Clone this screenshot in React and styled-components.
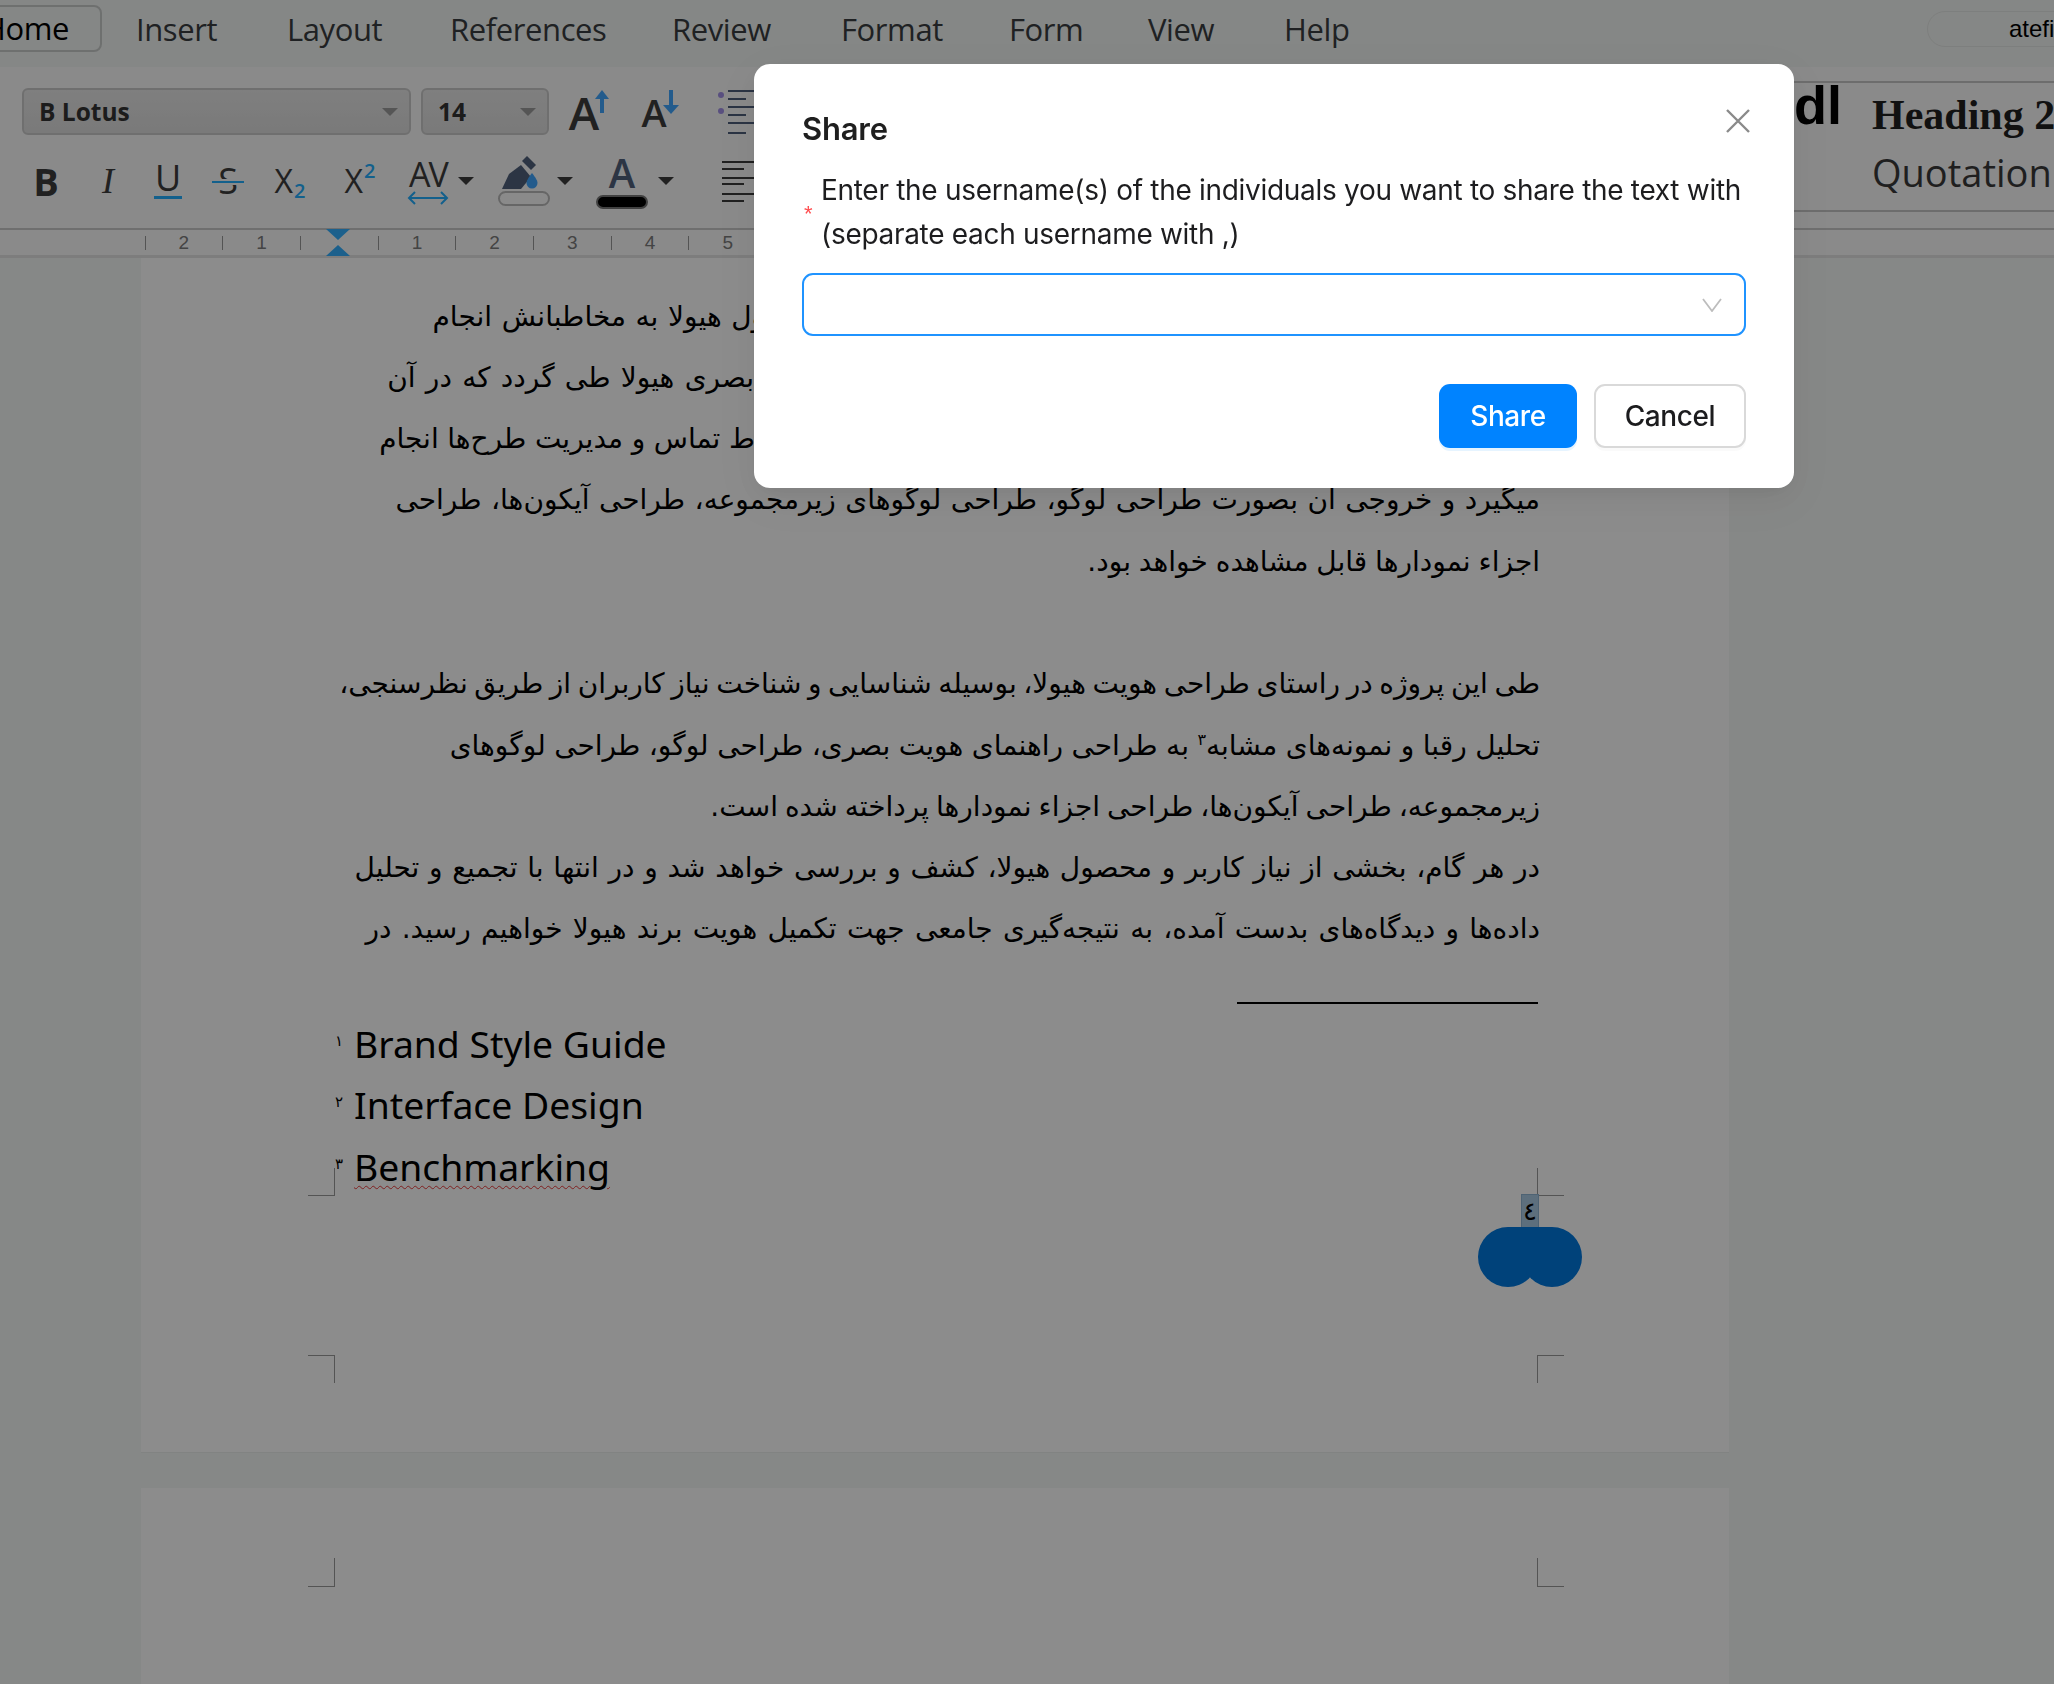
import React from "react";
import styled, { createGlobalStyle } from "styled-components";

const Global = createGlobalStyle`
  html, body { margin: 0; padding: 0; background: #f4f6f5; }
  #root { width: 2054px; height: 1684px; overflow: hidden; position: relative; }
  * { box-sizing: border-box; }
`;

const Shell = styled.div`
  width: 2054px; height: 1684px; overflow: hidden; display: flex; flex-direction: column;
  font-family: "Open Sans", "Noto Sans", sans-serif; color: #000;
`;
const TabBar = styled.div`
  height: 67px; flex: none; display: flex; align-items: flex-start; background: #f3f6f4; position: relative;
`;
const Tab = styled.div`
  font-size: 31px; letter-spacing: -0.4px; line-height: 47px; height: 47px; margin-top: 6px; color: ${p => (p.$active ? "#000" : "#3a3d41")};
  width: ${p => p.$w}px; white-space: nowrap; flex: none;
  ${p => p.$active && `
    margin: 5px 34px 0 -34px; padding-right: 31px; text-align: right; border: 2px solid #c9cccb; border-radius: 8px; line-height: 43px;
  `}
`;
const UserPill = styled.div`
  margin-left: auto; margin-top: 11px; margin-right: -40px; width: 167px; height: 36px; border: 1px solid #e4e7e5; border-radius: 18px;
  font: 24px/34px "Liberation Sans", sans-serif; padding-left: 81px; white-space: nowrap; flex: none; color: #000;
`;
const Toolbar = styled.div`
  height: 161px; flex: none; background: #fbfbfb; display: flex; overflow: hidden;
`;
const ToolColumn = styled.div`
  width: 760px; flex: none; display: flex; flex-direction: column;
`;
const ToolRow = styled.div`
  display: flex; align-items: center; flex: none; height: ${p => p.$h}px; padding-top: ${p => p.$pt || 0}px; padding-left: ${p => p.$pl || 0}px;
`;
const SelectBox = styled.div`
  width: ${p => p.$w}px; height: 47px; margin-left: ${p => p.$ml || 0}px; flex: none; display: flex; align-items: center; justify-content: space-between;
  padding: 0 11px 0 15px; border: 2px solid #cbcbcb; border-radius: 6px;
  background: linear-gradient(#e7e7e7, #dedede);
  font-size: 24.500px; font-weight: 700; color: #333;
`;
const Caret = styled.span`
  flex: none; width: 0; height: 0; border-left: ${p => p.$s || 8}px solid transparent; border-right: ${p => p.$s || 8}px solid transparent;
  border-top: ${p => (p.$s || 8)}px solid ${p => p.$c || "#9b9b9b"};
`;
const Slot = styled.div`
  width: ${p => p.$w}px; margin-left: ${p => p.$ml || 0}px; flex: none; display: flex; align-items: center; justify-content: center; position: relative;
  height: 50px;
`;
const Big = styled.span`
  font-size: ${p => p.$s}px; font-weight: ${p => p.$b || 400}; line-height: 1; color: ${p => p.$c || "#3c3c3c"};
  font-family: ${p => p.$f || `"Open Sans", sans-serif`}; font-style: ${p => p.$i ? "italic" : "normal"};
  letter-spacing: ${p => p.$ls || 0}px;
`;
const UnderLetter = styled(Big)`
  display: inline-block; border-bottom: 3px solid #24afff; line-height: 30px; padding: 0 1px 3px;
`;
const StrikeLetter = styled(Big)`
  position: relative; display: inline-block;
  &::after {
    content: ""; position: absolute; left: -6px; right: -6px; top: 50%; height: 2px; background: #24afff; box-shadow: 0 -2px 0 #fbfbfb, 0 2px 0 #fbfbfb;
  }
`;
const Index = styled.span`
  font-size: 20px; font-weight: 600; color: #24afff; line-height: 1; position: relative; top: ${p => p.$top}px; margin-left: 1px;
`;
const StylesPanel = styled.div`
  margin-left: auto; width: 260px; flex: none; margin-top: 14px; height: 131px; border-top: 2px solid #c7c7c7; border-bottom: 2px solid #c7c7c7;
  display: flex; overflow: hidden;
`;
const StyleHead = styled.div`
  font: 700 54px/44px "Liberation Sans", sans-serif; color: #000; width: 78px; flex: none; overflow: hidden; direction: rtl; text-align: left; padding-left: 0;
`;
const StyleStack = styled.div`
  display: flex; flex-direction: column; flex: none;
`;
const StyleH2 = styled.div`
  font: 700 42px/46px "Liberation Serif", serif; color: #1f1f1f; white-space: nowrap; margin-top: 9px;
`;
const StyleQuote = styled.div`
  font: 400 38px/50px "Open Sans", sans-serif; color: #3a3a3a; white-space: nowrap; margin-top: 9px;
`;
const Ruler = styled.div`
  height: 30px; flex: none; display: flex; align-items: center; padding-left: 125.6px; background: #fbfbfb; border-top: 2px solid #cacaca; border-bottom: 3px solid #e4e4e4;
`;
const RulerCell = styled.div`
  width: 38.85px; flex: none; height: 25px; display: flex; align-items: center; justify-content: center; font: 19px "Liberation Sans", sans-serif; color: #7c7c7c;
`;
const RulerTick = styled.span`
  width: 1px; height: 14px; background: #999;
`;
const PageArea = styled.div`
  flex: 1; min-height: 0; background: #f5f7f6; padding-left: 141px; display: flex; flex-direction: column; gap: 35px;
`;
const Page = styled.div`
  width: 1588px; height: ${p => p.$h}px; flex: none; background: #fff; position: relative; border-bottom: 1px solid #ecefed;
  padding: ${p => p.$pt || 0}px 189px 0 0;
`;
const Line = styled.div`
  direction: rtl; text-align: right; height: 61.3px; line-height: 61.3px; white-space: nowrap; font-size: 28px; color: #000;
  font-family: "DejaVu Sans", "Noto Sans", sans-serif; word-spacing: ${p => p.$ws || 0}px;
`;
const Sup = styled.sup`
  font-size: 16px; line-height: 0;
`;
const FootRule = styled.div`
  width: 301px; height: 2px; background: #000; margin: 42px 0 9px auto; position: relative; left: -2px;
`;
const FootList = styled.div`
  padding-left: 213px;
`;
const FootItem = styled.div`
  font: 400 37.300px/61.5px "Noto Sans", sans-serif; height: 61.5px; color: #000; position: relative; white-space: nowrap;
`;
const FootNum = styled.span`
  position: absolute; left: -19px; top: 13px; font: 15px/30px "DejaVu Sans", sans-serif;
`;
const Wavy = styled.span`
  text-decoration: underline wavy #e83a3a 1px; text-underline-offset: 4px;
`;
const Corner = styled.div`
  position: absolute; width: ${p => p.$w}px; height: ${p => p.$h}px; left: ${p => p.$x}px; top: ${p => p.$y}px;
  border-color: #9a9a9a; border-style: solid; border-width: 0;
  ${p => p.$side === "tl" && "border-top-width: 1px; border-right-width: 1px;"}
  ${p => p.$side === "tr" && "border-top-width: 1px; border-left-width: 1px;"}
  ${p => p.$side === "bl" && "border-bottom-width: 1px; border-right-width: 1px;"}
  ${p => p.$side === "br" && "border-bottom-width: 1px; border-left-width: 1px;"}
`;
const PageNumber = styled.div`
  position: absolute; left: 1380px; top: 936px; width: 18px; height: 34px; background: #a9cbe4; border: 1px solid #8fb5d3;
  display: flex; align-items: center; justify-content: center; font: 26px/1 "DejaVu Sans", sans-serif; color: #000;
`;
const Blob = styled.svg`
  position: absolute; left: 1337px; top: 969px;
`;

const Overlay = styled.div`
  position: fixed; inset: 0; background: rgba(0, 0, 0, 0.45); padding: 64px 0 0 754px;
`;
const Modal = styled.div`
  width: 1040px; height: 424px; background: #fff; border-radius: 16px; padding: 44px 48px 0; position: relative;
  box-shadow: 0 6px 16px -8px rgba(0,0,0,.08), 0 9px 28px 0 rgba(0,0,0,.05), 0 12px 48px 16px rgba(0,0,0,.03);
  font-family: "Inter", "Liberation Sans", sans-serif; color: #1c1c1e;
`;
const Title = styled.div`
  font-size: 31px; font-weight: 600; line-height: 42px; color: rgba(0,0,0,.88); letter-spacing: -0.2px;
`;
const CloseButton = styled.button`
  position: absolute; top: 42px; right: 41px; width: 30px; height: 30px; border: 0; background: none; padding: 0; color: #8a8a8a; display: flex; align-items: center; justify-content: center;
`;
const Label = styled.div`
  display: flex; align-items: center; margin-top: 18px;
`;
const Star = styled.span`
  color: #ff4d4f; width: 19px; flex: none; font: 22px/1 "Liberation Sans", sans-serif; padding-left: 2px; position: relative; top: 2px;
`;
const LabelText = styled.div`
  font-size: 28px; line-height: 44px; color: #1d1d1f; letter-spacing: -0.3px; white-space: nowrap;
`;
const SelectField = styled.div`
  margin-top: 17px; height: 63px; width: 944px; border: 2px solid #1f93ff; border-radius: 11px; display: flex; align-items: center; justify-content: flex-end; padding-right: 22px; color: #bdbdbd;
`;
const Footer = styled.div`
  display: flex; justify-content: flex-end; gap: 17px; margin-top: 48px; width: 944px;
`;
const Button = styled.button`
  height: 64px; width: ${p => p.$w}px; border-radius: 11px; font: 500 28px "Inter", "Liberation Sans", sans-serif; letter-spacing: -0.4px; padding: 0;
  ${p => p.$primary
    ? "background: #0083ff; color: #fff; border: 0; box-shadow: 0 3px 0 #e6f4ff;"
    : "background: #fff; color: #1c1c1e; border: 2px solid #d9d9d9; box-shadow: 0 3px 0 rgba(0,0,0,.02);"}
`;

const tabs = [["Home", 136, true], ["Insert", 151], ["Layout", 163], ["References", 222], ["Review", 169], ["Format", 168], ["Form", 139], ["View", 136], ["Help", 90]];

const rulerItems = [null, "2", null, "1", null, "m", null, "1", null, "2", null, "3", null, "4", null, "5", null];

const ArrowUp = () => (
  <svg width="14" height="24" viewBox="0 0 14 24" style={{ marginLeft: -4, alignSelf: "flex-start", marginTop: 3 }}>
    <path d="M7 23V6" stroke="#41a7ff" strokeWidth="4" />
    <path d="M0 9 7 0l7 9z" fill="#41a7ff" />
  </svg>
);
const ArrowDown = () => (
  <svg width="16" height="24" viewBox="0 0 16 24" style={{ marginLeft: -4, alignSelf: "flex-start", marginTop: 3 }}>
    <path d="M8 0v17" stroke="#41a7ff" strokeWidth="4" />
    <path d="M0 15 8 24l8-9z" fill="#41a7ff" />
  </svg>
);
const ListIcon = () => (
  <svg width="40" height="46" viewBox="0 0 40 46">
    <circle cx="3" cy="6" r="3" fill="#a291e8" /><circle cx="3" cy="22" r="3" fill="#a291e8" />
    <g stroke="#4e5f7c" strokeWidth="2"><path d="M10 2h26M10 10h18M10 18h26M10 26h18M10 34h26M10 44h18" /></g>
  </svg>
);
const AlignIcon = () => (
  <svg width="40" height="42" viewBox="0 0 40 42">
    <g stroke="#3c3c3c" strokeWidth="2"><path d="M0 2h36M0 9h22M0 18h36M0 24h22M0 34h36M0 41h22" /></g>
  </svg>
);
const Spacing = () => (
  <svg width="42" height="14" viewBox="0 0 42 14" fill="none" stroke="#24afff" strokeWidth="2">
    <path d="M2 7h38M8 1 2 7l6 6M34 1l6 6-6 6" />
  </svg>
);
const PaintIcon = () => (
  <svg width="54" height="50" viewBox="0 0 54 50">
    <path d="M5 33 12 18 24 9l10 12-10 12z" fill="#50617c" />
    <path d="M25 5l5-5 9 9-5 5z" fill="#50617c" />
    <path d="M35 18c4 5 5.500 8 5.500 10a5.500 5.500 0 0 1-11 0c0-2 1.500-5 5.500-10z" transform="translate(0 -1)" fill="#41a7ff" />
    <rect x="2" y="36" width="50" height="13" rx="6.500" fill="none" stroke="#bbb" strokeWidth="2" />
  </svg>
);
const ColorBar = styled.div`
  width: 52px; height: 14px; border-radius: 7px; background: #000; border: 2px solid #777; margin-top: 2px;
`;
const ColorStack = styled.div`
  display: flex; flex-direction: column; align-items: center;
`;
const Marker = () => (
  <svg width="26" height="27" viewBox="0 0 26 27" style={{ marginLeft: -2 }}>
    <rect x="9" y="0" width="8" height="27" fill="#fbfbfb" />
    <path d="M1 0h24L13 11zM1 27h24L13 16z" fill="#33b0ff" />
  </svg>
);

const lines = [
  ["این پروژه با هدف طراحی هویت بصری برای معرفی و انتقال محصول هیولا به مخاطبانش انجام", 0.7],
  ["می‌شود. این پروژه در مراحل مختلف طراحی و تحلیل نیازها هویت بصری هیولا طی گردد که در آن", 1.4],
  ["طراحی اجزای مختلف هویت بصری جدید و طراحی لوگو و نقاط ارتباط تماس و مدیریت طرح‌ها انجام", -0.35],
  ["میگیرد و خروجی آن بصورت طراحی لوگو، طراحی لوگوهای زیرمجموعه، طراحی آیکون‌ها، طراحی", 0.6],
  ["اجزاء نمودارها قابل مشاهده خواهد بود.", -1],
  ["\u00a0", 0],
  ["طی این پروژه در راستای طراحی هویت هیولا، بوسیله شناسایی و شناخت نیاز کاربران از طریق نظرسنجی،", -2.3],
  [<>تحلیل رقبا و نمونه‌های مشابه<Sup>۳</Sup> به طراحی راهنمای هویت بصری، طراحی لوگو، طراحی لوگوهای</>, -0.4],
  ["زیرمجموعه، طراحی آیکون‌ها، طراحی اجزاء نمودارها پرداخته شده است.", -1.9],
  ["در هر گام، بخشی از نیاز کاربر و محصول هیولا، کشف و بررسی خواهد شد و در انتها با تجمیع و تحلیل", 0.8],
  ["داده‌ها و دیدگاه‌های بدست آمده، به نتیجه‌گیری جامعی جهت تکمیل هویت برند هیولا خواهیم رسید. در", 1.4],
];

export default function App() {
  return (
    <>
      <Global />
      <Shell>
        <TabBar>
          {tabs.map(([t, w, a]) => <Tab key={t} $w={w} $active={a}>{t}</Tab>)}
          <UserPill>atefi</UserPill>
        </TabBar>
        <Toolbar>
          <ToolColumn>
            <ToolRow $h={68} $pt={21} $pl={22}>
              <SelectBox $w={389}>B Lotus<Caret /></SelectBox>
              <SelectBox $w={128} $ml={10}>14<Caret /></SelectBox>
              <Slot $w={52} $ml={14}><Big $s={46} $b={600}>A</Big><ArrowUp /></Slot>
              <Slot $w={48} $ml={21}><Big $s={38} $b={600}>A</Big><ArrowDown /></Slot>
              <Slot $w={40} $ml={34}><ListIcon /></Slot>
            </ToolRow>
            <ToolRow $h={92} $pl={16}>
              <Slot $w={60}><Big $s={38} $b={700}>B</Big></Slot>
              <Slot $w={64}><Big $s={36} $i $f={`"Liberation Serif", serif`}>I</Big></Slot>
              <Slot $w={56}><UnderLetter $s={36}>U</UnderLetter></Slot>
              <Slot $w={64}><StrikeLetter $s={36}>S</StrikeLetter></Slot>
              <Slot $w={60}><Big $s={32}>X</Big><Index $top={10}>2</Index></Slot>
              <Slot $w={80}><Big $s={32}>X</Big><Index $top={-10}>2</Index></Slot>
              <Slot $w={56}><ColorStack><Big $s={34} $ls={-2}>AV</Big><Spacing /></ColorStack></Slot>
              <Slot $w={20}><Caret $c="#3c3c3c" /></Slot>
              <Slot $w={56} $ml={20}><PaintIcon /></Slot>
              <Slot $w={20} $ml={3}><Caret $c="#3c3c3c" /></Slot>
              <Slot $w={56} $ml={19}><ColorStack><Big $s={40} $b={600} $c="#50617c">A</Big><ColorBar /></ColorStack></Slot>
              <Slot $w={20} $ml={6}><Caret $c="#3c3c3c" /></Slot>
              <Slot $w={40} $ml={46}><AlignIcon /></Slot>
            </ToolRow>
          </ToolColumn>
          <StylesPanel>
            <StyleHead>dl</StyleHead>
            <StyleStack>
              <StyleH2>Heading 2</StyleH2>
              <StyleQuote>Quotation</StyleQuote>
            </StyleStack>
          </StylesPanel>
        </Toolbar>
        <Ruler>
          {rulerItems.map((it, i) => (
            <RulerCell key={i}>{it === null ? <RulerTick /> : it === "m" ? <Marker /> : it}</RulerCell>
          ))}
        </Ruler>
        <PageArea>
          <Page $h={1195} $pt={27.5}>
            {lines.map(([t, ws], i) => <Line key={i} $ws={ws}>{t}</Line>)}
            <FootRule />
            <FootList>
              <FootItem><FootNum>۱</FootNum>Brand Style Guide</FootItem>
              <FootItem><FootNum>۲</FootNum>Interface Design</FootItem>
              <FootItem><FootNum>۳</FootNum><Wavy>Benchmarking</Wavy></FootItem>
            </FootList>
            <Corner $side="bl" $x={167} $y={910} $w={27} $h={28} />
            <Corner $side="br" $x={1396} $y={910} $w={27} $h={28} />
            <Corner $side="tl" $x={167} $y={1097} $w={27} $h={28} />
            <Corner $side="tr" $x={1396} $y={1097} $w={27} $h={28} />
            <PageNumber>٤</PageNumber>
            <Blob width="104" height="60" viewBox="0 0 104 60">
              <circle cx="30" cy="30" r="30" fill="#0078df" />
              <circle cx="74" cy="30" r="30" fill="#0078df" />
              <rect x="30" y="0" width="44" height="42" fill="#0078df" />
            </Blob>
          </Page>
          <Page $h={400}>
            <Corner $side="bl" $x={167} $y={70} $w={27} $h={29} />
            <Corner $side="br" $x={1396} $y={70} $w={27} $h={29} />
          </Page>
        </PageArea>
      </Shell>
      <Overlay>
        <Modal>
          <Title>Share</Title>
          <CloseButton aria-label="Close">
            <svg width="26" height="26" viewBox="0 0 26 26" stroke="currentColor" strokeWidth="2.400" fill="none"><path d="M2 2l22 22M24 2 2 24" /></svg>
          </CloseButton>
          <Label>
            <Star>*</Star>
            <LabelText>Enter the username(s) of the individuals you want to share the text with<br />(separate each username with ,)</LabelText>
          </Label>
          <SelectField>
            <svg width="20" height="14" viewBox="0 0 20 14" fill="none" stroke="currentColor" strokeWidth="1.800"><path d="M1 1l9 12 9-12" /></svg>
          </SelectField>
          <Footer>
            <Button $primary $w={138}>Share</Button>
            <Button $w={152}>Cancel</Button>
          </Footer>
        </Modal>
      </Overlay>
    </>
  );
}
